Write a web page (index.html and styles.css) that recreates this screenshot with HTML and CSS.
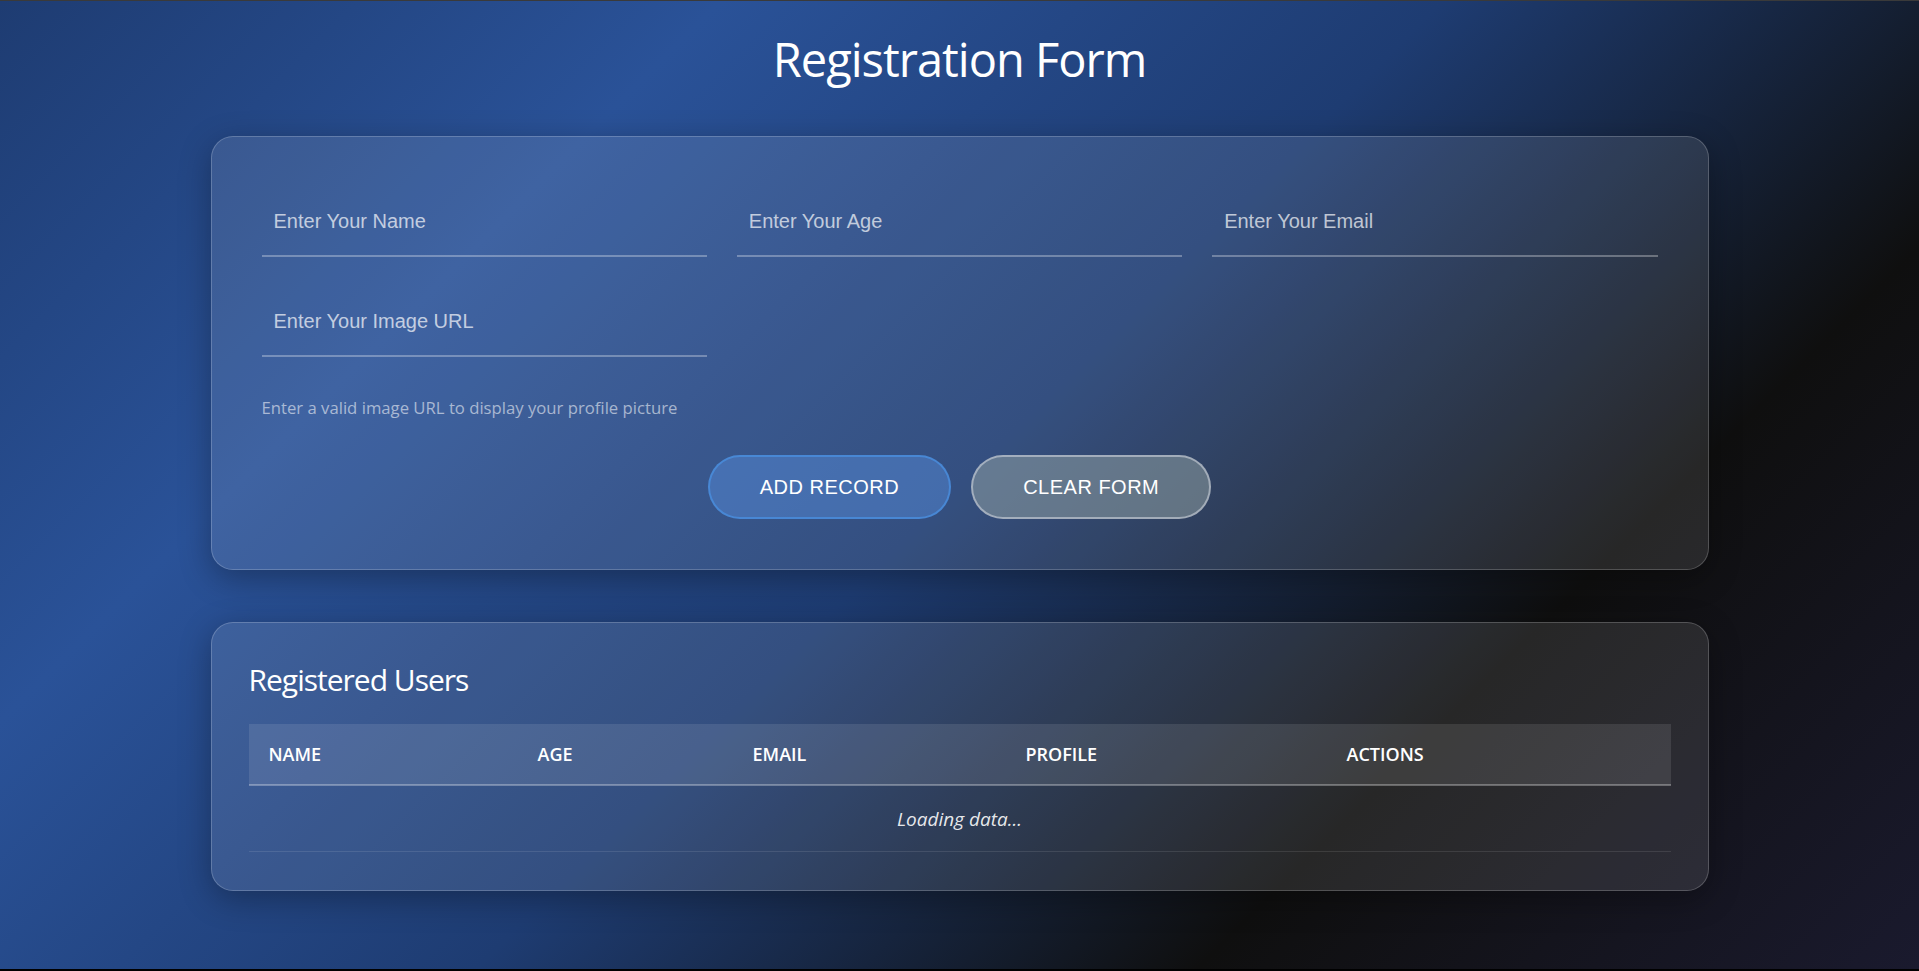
FILE: index.html
```html
<!DOCTYPE html>
<html lang="en">
<head>
<meta charset="utf-8">
<title>Registration Form</title>
<link rel="stylesheet" href="styles.css">
</head>
<body>
<div class="page">
  <h1 class="title">Registration Form</h1>

  <section class="card form-card">
    <div class="fields">
      <input class="field" type="text" placeholder="Enter Your Name">
      <input class="field" type="text" placeholder="Enter Your Age">
      <input class="field" type="text" placeholder="Enter Your Email">
      <input class="field" type="text" placeholder="Enter Your Image URL">
    </div>
    <p class="hint">Enter a valid image URL to display your profile picture</p>
    <div class="actions">
      <button class="btn btn-add" type="button">ADD RECORD</button>
      <button class="btn btn-clear" type="button">CLEAR FORM</button>
    </div>
  </section>

  <section class="card table-card">
    <h2 class="section-title">Registered Users</h2>
    <table class="users">
      <thead>
        <tr>
          <th class="col-name">NAME</th>
          <th class="col-age">AGE</th>
          <th class="col-email">EMAIL</th>
          <th class="col-profile">PROFILE</th>
          <th class="col-actions">ACTIONS</th>
        </tr>
      </thead>
      <tbody>
        <tr>
          <td class="loading" colspan="5">Loading data...</td>
        </tr>
      </tbody>
    </table>
  </section>
</div>
</body>
</html>
```

FILE: styles.css
```css
html {
  background: #000;
}

body {
  margin: 0;
  font-family: "Open Sans", "Noto Sans", sans-serif;
  color: #fff;
}

.page {
  box-sizing: border-box;
  height: 969px;
  border-top: 1px solid #3a3a3a;
  padding-top: 25px;
  background: linear-gradient(135deg, #1e3c72 0%, #2a5298 25%, #1e3c72 50%, #0f0f0f 75%, #1a1a2e 100%);
  overflow: hidden;
}

.title {
  margin: 0 0 44px;
  text-align: center;
  font-size: 47px;
  line-height: 66px;
  font-weight: 400;
  letter-spacing: -1px;
}

.card {
  box-sizing: border-box;
  width: 1498px;
  margin: 0 auto;
  background: rgba(255, 255, 255, 0.1);
  border: 1px solid rgba(255, 255, 255, 0.2);
  border-radius: 22px;
  box-shadow: 0 8px 32px rgba(0, 0, 0, 0.3);
}

.form-card {
  padding: 50px;
}

.fields {
  display: grid;
  grid-template-columns: repeat(3, 1fr);
  gap: 30px 30px;
}

.field {
  box-sizing: border-box;
  height: 70px;
  width: 100%;
  padding: 22px 12px;
  margin: 0;
  border: none;
  border-bottom: 2px solid rgba(255, 255, 255, 0.3);
  background: transparent;
  font-family: "Liberation Sans", Arial, sans-serif;
  font-size: 20px;
  line-height: 24px;
  color: #fff;
  outline: none;
}

.field::placeholder {
  color: rgba(255, 255, 255, 0.7);
}

.hint {
  margin: 40px 0 0;
  font-size: 16.7px;
  line-height: 22px;
  color: rgba(255, 255, 255, 0.56);
}

.actions {
  display: flex;
  justify-content: center;
  gap: 20px;
  margin-top: 36px;
}

.btn {
  box-sizing: border-box;
  height: 64px;
  padding: 18px 50px;
  border-radius: 32px;
  font-family: "Liberation Sans", Arial, sans-serif;
  font-size: 20px;
  line-height: 24px;
  letter-spacing: 0.5px;
  color: #fff;
  cursor: pointer;
}

.btn-add {
  background: rgba(88, 145, 225, 0.45);
  border: 2px solid rgba(74, 144, 226, 0.75);
}

.btn-clear {
  background: rgba(149, 165, 166, 0.5);
  border: 2px solid rgba(205, 210, 220, 0.6);
}

.table-card {
  margin-top: 52px;
  padding: 36px 37px 38px;
}

.section-title {
  margin: 0 0 23px;
  font-size: 30px;
  line-height: 42px;
  font-weight: 400;
  letter-spacing: -1px;
}

.users {
  width: 100%;
  border-collapse: collapse;
  table-layout: fixed;
}

.users th {
  padding: 19px 20px;
  text-align: left;
  font-size: 18px;
  line-height: 22px;
  font-weight: 600;
  background: rgba(255, 255, 255, 0.1);
  border-bottom: 2px solid rgba(255, 255, 255, 0.3);
}

.col-name { width: 229px; }
.col-age { width: 175px; }
.col-email { width: 233px; }
.col-profile { width: 281px; }
.col-actions { width: auto; }

.loading {
  padding: 22px 20px 21px;
  text-align: center;
  font-size: 19px;
  line-height: 22px;
  font-style: italic;
  color: rgba(255, 255, 255, 0.9);
  border-bottom: 1px solid rgba(255, 255, 255, 0.1);
}
```
